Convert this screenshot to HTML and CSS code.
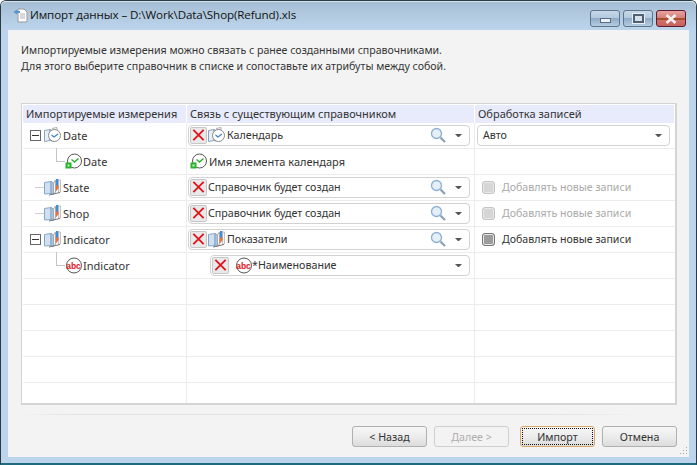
FILE: index.html
```html
<!DOCTYPE html>
<html lang="ru">
<head>
<meta charset="utf-8">
<title>Импорт данных</title>
<link rel="stylesheet" href="styles.css">
</head>
<body>
<svg class="defs" width="0" height="0" aria-hidden="true">
  <symbol id="book" viewBox="0 0 17 17">
    <path d="M0.5 3.5 7 2.5V14.5L0.5 15Z" fill="#cfe0f2" stroke="#86a6c8"/>
    <path d="M7 2.5 9.5 4V15.5L7 14.5Z" fill="#a8c4e2" stroke="#86a6c8"/>
    <path d="M9.5 4 11.5 1V13L9.5 15.5Z" fill="#f4f4f4" stroke="#aaa"/>
    <path d="M12 0H14.5V9L12 11.5Z" fill="#3f8ede"/>
    <path d="M14.5 1H16.5V13L14.5 13.5Z" fill="#f2f2f2" stroke="#aaa" stroke-width=".7"/>
    <path d="M12 6.5H14.5V9L12 12.5Z" fill="#e8733a"/>
    <path d="M5 16 16 13.5" stroke="#777" fill="none"/>
  </symbol>
  <symbol id="cal" viewBox="0 0 17 17">
    <path d="M0.5 3.5 6 2.5V13.5L0.5 14.5Z" fill="#e6eef7" stroke="#8ea3b9"/>
    <path d="M6 2.5 8.5 4V14L6 13.5Z" fill="#cfdcea" stroke="#8ea3b9"/>
    <path d="M8 1.5 13 0.5V3" fill="none" stroke="#b0b0b0"/>
    <circle cx="10.5" cy="8.5" r="6" fill="#fff" stroke="#8a8a8a"/>
    <path d="M7.5 8 10 10 14 7" fill="none" stroke="#3f7fd0" stroke-width="1.2"/>
  </symbol>
  <symbol id="clock" viewBox="0 0 17 17">
    <circle cx="9.5" cy="8" r="7" fill="#fff" stroke="#555"/>
    <path d="M6.5 6.5 9.5 9 13.5 5.5" fill="none" stroke="#2fae2f" stroke-width="1.4"/>
    <path d="M0.5 9.5H6.5V15.5H0.5Z" fill="#27b327"/>
    <path d="M2.5 11.5H4.5V13.5H2.5Z" fill="#d6f5d6"/>
  </symbol>
  <symbol id="x" viewBox="0 0 16 16">
    <path d="M2.5 2.5 13.5 13.5M13.5 2.5 2.5 13.5" stroke="#e0141c" stroke-width="2" fill="none"/>
  </symbol>
  <symbol id="lens" viewBox="0 0 16 16">
    <circle cx="6.5" cy="6.5" r="5" fill="#e4effa" stroke="#8cb0d4" stroke-width="1.3"/>
    <path d="M10.5 10.5 15 15" stroke="#8aa0b8" stroke-width="2.2"/>
  </symbol>
</svg>

<div class="window">
  <header class="titlebar">
    <svg class="title-icon" width="16" height="16" viewBox="0 0 16 16">
      <path d="M5 2H11L14 5V15H5Z" fill="#fbfbfb" stroke="#9a9a9a"/>
      <path d="M7 7H12M7 9H12M7 11H12" stroke="#b5b5b5"/>
      <path d="M0.5 5 4 2.5V4H7V6H4V7.5Z" fill="#5a93cf"/>
    </svg>
    <span class="title-text">Импорт данных – D:\Work\Data\Shop(Refund).xls</span>
    <div class="caption-buttons">
      <div class="cap"><span class="glyph-min"></span></div>
      <div class="cap"><span class="glyph-max"></span></div>
      <div class="cap cap-close"><svg width="14" height="10" viewBox="0 0 14 10"><path d="M2.5 1 11.5 9M11.5 1 2.5 9" stroke="#f4f0f0" stroke-width="2.6" fill="none"/></svg></div>
    </div>
  </header>

  <main class="pane">
    <p class="intro">Импортируемые измерения можно связать с ранее созданными справочниками.<br>Для этого выберите справочник в списке и сопоставьте их атрибуты между собой.</p>

    <section class="table">
      <div class="row head">
        <div class="cell c1">Импортируемые измерения</div>
        <div class="cell c2">Связь с существующим справочником</div>
        <div class="cell c3">Обработка записей</div>
      </div>

      <div class="row">
        <div class="cell c1 lvl0"><span class="toggle"></span><svg class="ic"><use href="#cal"/></svg><span class="nm">Date</span></div>
        <div class="cell c2"><div class="combo"><span class="xbtn"><svg width="16" height="16"><use href="#x"/></svg></span><svg class="ic"><use href="#cal"/></svg><span class="val">Календарь</span><svg class="lens"><use href="#lens"/></svg><span class="arrow"></span></div></div>
        <div class="cell c3"><div class="combo plain"><span class="val">Авто</span><span class="arrow"></span></div></div>
      </div>

      <div class="row">
        <div class="cell c1 lvl1"><span class="elbow"></span><svg class="ic"><use href="#clock"/></svg><span class="nm child">Date</span></div>
        <div class="cell c2 static"><svg class="ic"><use href="#clock"/></svg><span class="nm">Имя элемента календаря</span></div>
        <div class="cell c3"></div>
      </div>

      <div class="row">
        <div class="cell c1 lvl0 leaf"><span class="dash"></span><svg class="ic"><use href="#book"/></svg><span class="nm">State</span></div>
        <div class="cell c2"><div class="combo"><span class="xbtn"><svg width="16" height="16"><use href="#x"/></svg></span><span class="val">Справочник будет создан</span><svg class="lens"><use href="#lens"/></svg><span class="arrow"></span></div></div>
        <div class="cell c3 check off"><span class="box"></span>Добавлять новые записи</div>
      </div>

      <div class="row">
        <div class="cell c1 lvl0 leaf"><span class="dash"></span><svg class="ic"><use href="#book"/></svg><span class="nm">Shop</span></div>
        <div class="cell c2"><div class="combo"><span class="xbtn"><svg width="16" height="16"><use href="#x"/></svg></span><span class="val">Справочник будет создан</span><svg class="lens"><use href="#lens"/></svg><span class="arrow"></span></div></div>
        <div class="cell c3 check off"><span class="box"></span>Добавлять новые записи</div>
      </div>

      <div class="row">
        <div class="cell c1 lvl0"><span class="toggle"></span><svg class="ic"><use href="#book"/></svg><span class="nm">Indicator</span></div>
        <div class="cell c2"><div class="combo"><span class="xbtn"><svg width="16" height="16"><use href="#x"/></svg></span><svg class="ic"><use href="#book"/></svg><span class="val">Показатели</span><svg class="lens"><use href="#lens"/></svg><span class="arrow"></span></div></div>
        <div class="cell c3 check"><span class="box"></span>Добавлять новые записи</div>
      </div>

      <div class="row">
        <div class="cell c1 lvl1"><span class="elbow"></span><svg class="ic" viewBox="0 0 17 17"><circle cx="9" cy="8.5" r="7.5" fill="#fff" stroke="#555"/><text x="8.5" y="11.5" text-anchor="middle" class="abc-text">abc</text></svg><span class="nm child">Indicator</span></div>
        <div class="cell c2 nested"><div class="combo"><span class="xbtn"><svg width="16" height="16"><use href="#x"/></svg></span><svg class="ic abc-ic" viewBox="0 0 17 17"><circle cx="9" cy="8.5" r="7.5" fill="#fff" stroke="#555"/><text x="8.5" y="11.5" text-anchor="middle" class="abc-text">abc</text></svg><span class="val">*Наименование</span><span class="arrow"></span></div></div>
        <div class="cell c3"></div>
      </div>

      <div class="row"><div class="cell c1"></div><div class="cell c2"></div><div class="cell c3"></div></div>
      <div class="row"><div class="cell c1"></div><div class="cell c2"></div><div class="cell c3"></div></div>
      <div class="row"><div class="cell c1"></div><div class="cell c2"></div><div class="cell c3"></div></div>
      <div class="row"><div class="cell c1"></div><div class="cell c2"></div><div class="cell c3"></div></div>
      <div class="row last"><div class="cell c1"></div><div class="cell c2"></div><div class="cell c3"></div></div>
    </section>

    <div class="separator"></div>

    <footer class="buttons">
      <button class="btn" type="button">&lt; Назад</button>
      <button class="btn disabled" type="button">Далее &gt;</button>
      <button class="btn primary" type="button"><span class="focus">Импорт</span></button>
      <button class="btn" type="button">Отмена</button>
    </footer>
    <svg class="grip" width="10" height="10" viewBox="0 0 10 10"><path d="M8 1h1v1H8zM5 4h1v1H5zM8 4h1v1H8zM2 7h1v1H2zM5 7h1v1H5zM8 7h1v1H8z" fill="#a8a8a8"/></svg>
  </main>
</div>
</body>
</html>
```

FILE: styles.css
```css
* { box-sizing: border-box; }
html, body { margin: 0; height: 100%; background: #fff; }
body { overflow: hidden; font-family: "Noto Sans", "Liberation Sans", sans-serif; font-size: 11px; color: #333; }
.defs { position: absolute; }

.window {
  width: 697px; height: 465px; display: flex; flex-direction: column;
  border: 1px solid #2b3a44; border-radius: 6px 6px 0 0;
  border-bottom: 2px solid #1f6a7c;
  background: #bcd5ec;
  padding: 0 7px 6px;
}
.titlebar {
  height: 29px; flex: none; display: flex; align-items: center;
  margin: 0 -7px; padding: 0 10px 2px 12px;
  border-radius: 5px 5px 0 0;
  background: linear-gradient(#a4bdd3, #b3cbe1 55%, #bcd5ec);
  box-shadow: inset 0 1px 0 #d5e1ec;
}
.title-icon { margin: 1px 1px 0 0; flex: none; }
.title-text { font-family: "Open Sans", "Liberation Sans", sans-serif; font-size: 11.6px; color: #111; letter-spacing: -.1px; }
.caption-buttons { margin-left: auto; display: flex; gap: 3px; align-self: flex-start; margin-top: 9px; }
.cap {
  width: 30px; height: 17px; display: flex; align-items: center; justify-content: center;
  border: 1px solid #5e7488; border-radius: 3px;
  background: linear-gradient(#c6d8e9 0, #b3c9de 48%, #8fabc7 50%, #b6cde2 100%);
}
.cap-close { border-color: #5c1a2a; background: linear-gradient(#e7a3a0 0, #d6807c 45%, #a8502e 48%, #a8502e 60%, #d2706c 62%, #c8605c 100%); }
.glyph-min { width: 11px; height: 5px; margin-top: 3px; background: #eef2f6; border: 1px solid #5a6c80; }
.glyph-max { width: 11px; height: 9px; border: 2px solid #4e6074; background: #d5e2ee; box-shadow: 0 0 0 1px #e8eef4; }

.pane {
  position: relative; flex: 1; display: flex; flex-direction: column;
  background: #f3f3f3; padding: 12px 12px 0 13px; min-height: 0;
}
.intro { margin: 0; height: 61px; font-size: 10.6px; line-height: 16px; color: #333; }

.table {
  height: 302px; overflow: hidden; flex: none;
  border: 1px solid #d4d4d4; border-width: 1px 2px 2px 1px;
  background: #fff; padding: 1px 0 0 1px; width: 656px;
}
.row { display: grid; grid-template-columns: 164px 288px 1fr; height: 26px; border-bottom: 1px solid #ececec; }
.row.last { border-bottom: 0; }
.row.head { height: 18px; border-bottom: 0; color: #333; font-size: 11px; }
.row.head .cell { background: #e8ebfb; padding-left: 3px; border-right: 1px solid #fff; line-height: 16px; }
.cell { display: flex; align-items: center; border-right: 1px solid #ececec; min-width: 0; white-space: nowrap; }
.c1 { position: relative; color: #333; }
.c3 { border-right: 0; }
.row:not(.head) .c2 { padding: 0 4px 1px 1px; }
.row:not(.head) .c3 { padding: 0 5px 1px 2px; }

.lvl0 { padding-left: 7px; }
.lvl1 { padding-left: 33px; }
.toggle { width: 11px; height: 11px; border: 1px solid #666; background: linear-gradient(90deg, #333, #333) center/7px 1px no-repeat #fff; flex: none; margin-right: 3px; }
.dash { width: 9px; height: 1px; background: #d0d0d0; margin: 0 0 0 5px; flex: none; }
.elbow { width: 9px; height: 14px; margin: -14px 0 0 0; border: 1px solid #c4c4c4; border-width: 0 0 1px 1px; flex: none; }
.ic { width: 17px; height: 17px; flex: none; }
.nm { margin-left: 2px; }
.nm.child { margin-left: 1px; }
.static { padding-left: 3px !important; }
.static .nm { margin-left: 2px; }

.combo {
  flex: 1; height: 21px; display: flex; align-items: center; min-width: 0;
  background: #fff; border: 1px solid #d2d2d2; border-radius: 4px; padding: 0 6px 0 1px;
  color: #333; font-size: 10.7px;
}
.combo .ic { margin-right: 2px; }
.combo .abc-ic { margin-left: 5px; margin-right: 0; }
.combo.plain { padding-left: 5px; }
.val { flex: 1; }
.xbtn {
  width: 17px; height: 17px; display: flex; align-items: center; justify-content: center; flex: none;
  background: #e9e9e9; border: 1px solid #c6c6c6; border-radius: 2px; margin-right: 1px;
}
.lens { width: 16px; height: 16px; margin-right: 9px; flex: none; }
.arrow { height: 0; border: 3px solid transparent; border-top: 3px solid #555; border-bottom: 0; margin: 1px 1px 0 0; flex: none; width: 7px; }
.nested { padding-left: 23px !important; }

.check { gap: 7px; padding-left: 7px !important; font-size: 10.6px; color: #333; }
.box { width: 13px; height: 13px; border: 1px solid #777; border-radius: 3px; background: #9c9c9c; box-shadow: inset 0 0 0 1px #e8e8e8; flex: none; }
.check.off { color: #a9a9a9; }
.check.off .box { border-color: #c4c4c4; background: #d6d6d6; }
.abc-text { font: bold 8.5px "Liberation Sans", sans-serif; fill: #e0141c; }

.separator { height: 1px; margin: 9px 34px 0 0; background: linear-gradient(90deg, #f3f3f3, #e2e2e2 8%, #e2e2e2 85%, #f3f3f3); }
.buttons { display: flex; justify-content: flex-end; padding: 11px 0 0; width: 656px; }
.btn {
  width: 75px; height: 21px; margin-left: 7px; padding: 0;
  font: 10.7px "Noto Sans", "Liberation Sans", sans-serif; color: #333;
  border: 1px solid #b0b0b0; border-radius: 3px;
  background: linear-gradient(#f6f6f6, #ececec 50%, #dcdcdc);
}
.btn.disabled { color: #aeaeae; border-color: #cfcfcf; background: #f3f3f3; }
.btn.primary { margin-left: 11px; border-color: #d9a869; padding: 1px; }
.focus { display: flex; align-items: center; justify-content: center; width: 100%; height: 100%; border: 1px dotted #111; }
.grip { position: absolute; right: 1px; bottom: 1px; }
```
